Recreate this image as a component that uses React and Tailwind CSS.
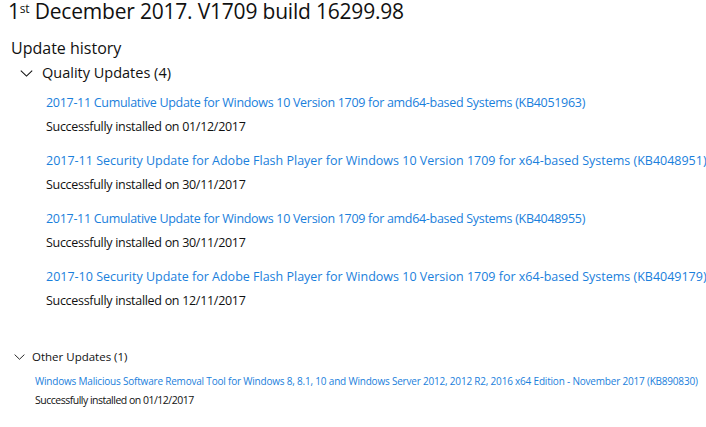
const QUALITY = [
  { title: '2017-11 Cumulative Update for Windows 10 Version 1709 for amd64-based Systems (KB4051963)', date: '01/12/2017', tight: true },
  { title: '2017-11 Security Update for Adobe Flash Player for Windows 10 Version 1709 for x64-based Systems (KB4048951)', date: '30/11/2017' },
  { title: '2017-11 Cumulative Update for Windows 10 Version 1709 for amd64-based Systems (KB4048955)', date: '30/11/2017', tight: true },
  { title: '2017-10 Security Update for Adobe Flash Player for Windows 10 Version 1709 for x64-based Systems (KB4049179)', date: '12/11/2017' },
]

const Chevron = ({ className }) => (
  <svg viewBox="0 0 14 8" className={className} fill="none" stroke="currentColor" strokeWidth="1.2">
    <path d="M0.5 0.8 L7 7 L13.5 0.8" />
  </svg>
)

export default function App() {
  return (
    <div className="w-[706px] h-[427px] overflow-hidden bg-white text-[#111]" style={{ fontFamily: '"Open Sans", "Noto Sans", sans-serif' }}>
      <h1 className="pl-[8px] text-[21px] leading-[22px] tracking-[-0.2px] whitespace-nowrap">
        1<sup className="text-[12px]">st</sup> December 2017. V1709 build 16299.98
      </h1>

      <h2 className="pl-[11px] mt-[16px] text-[16px] leading-[20px]">Update history</h2>

      <div className="flex items-center gap-[9px] pl-[20px] mt-[6px] h-[18px] text-[14.5px]">
        <Chevron className="w-[13px] h-[7px]" />
        <span>Quality Updates (4)</span>
      </div>

      <div className="pl-[46px] mt-[13px] flex flex-col gap-[18px]">
        {QUALITY.map(u => (
          <div key={u.title} className="flex flex-col gap-[8px] text-[12.5px] leading-[16px] whitespace-nowrap">
            <span className={`text-[#1a80dc] ${u.tight ? 'tracking-[-0.3px]' : 'tracking-[0px]'}`}>{u.title}</span>
            <span className="tracking-[-0.3px]">Successfully installed on {u.date}</span>
          </div>
        ))}
      </div>

      <div className="flex items-center gap-[7px] pl-[14px] mt-[40px] h-[16px] text-[11.5px]">
        <Chevron className="w-[11px] h-[6px]" />
        <span>Other Updates (1)</span>
      </div>

      <div className="pl-[35px] mt-[9px] flex flex-col gap-[5px] leading-[14px] whitespace-nowrap">
        <span className="text-[#1a80dc] text-[10px] tracking-[-0.2px]">Windows Malicious Software Removal Tool for Windows 8, 8.1, 10 and Windows Server 2012, 2012 R2, 2016 x64 Edition - November 2017 (KB890830)</span>
        <span className="text-[10.5px] tracking-[-0.5px]">Successfully installed on 01/12/2017</span>
      </div>
    </div>
  )
}
